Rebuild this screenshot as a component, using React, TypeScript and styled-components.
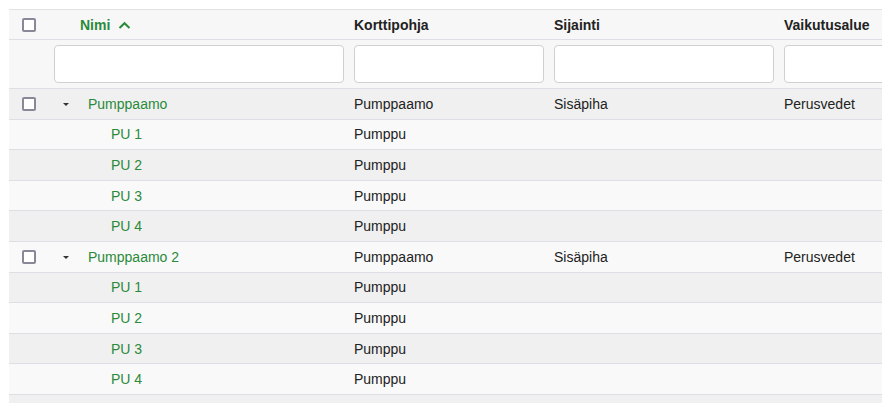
import React from "react";
import styled, { createGlobalStyle } from "styled-components";

const Global = createGlobalStyle`
  html, body { margin: 0; padding: 0; background: #fff; overflow: hidden; }
  body { font-family: "Liberation Sans", Arial, sans-serif; font-size: 14px; color: #222; }
`;

const COLS = "40px 300px 200px 230px 260px";

const Viewport = styled.div`
  box-sizing: border-box;
  width: 100vw;
  height: 100vh;
  padding: 9px 0 0 9px;
  overflow: hidden;
`;

const Table = styled.div`
  width: 1030px;
  border-top: 1px solid #e2e2e6;
`;

const Row = styled.div<{ $bg: string; $h: number }>`
  display: grid;
  grid-template-columns: ${COLS};
  align-items: center;
  box-sizing: border-box;
  height: ${(p) => p.$h}px;
  background: ${(p) => p.$bg};
  border-bottom: 1px solid #dedfe4;
`;

const Cell = styled.div`
  padding: 0 5px;
  display: flex;
  align-items: center;
  white-space: nowrap;
  overflow: hidden;
`;

const CheckCell = styled.div`
  display: flex;
  justify-content: center;
  align-items: center;
`;

const Check = styled.span`
  display: inline-block;
  box-sizing: border-box;
  width: 14px;
  height: 14px;
  border: 2px solid #8a8898;
  border-radius: 2px;
  background: #fff;
`;

const HeadText = styled.span<{ $green?: boolean }>`
  font-weight: bold;
  color: ${(p) => (p.$green ? "#2a8a3a" : "#222")};
`;

const NameHead = styled(Cell)`
  padding-left: 31px;
  gap: 8px;
`;

const FilterInput = styled.input`
  box-sizing: border-box;
  width: 100%;
  height: 38px;
  border: 1px solid #cfcfd4;
  border-radius: 4px;
  background: #fff;
  outline: none;
`;

const NameCell = styled(Cell)<{ $child?: boolean }>`
  padding-left: ${(p) => (p.$child ? 62 : 14)}px;
  color: #2a8a3a;
`;

const Caret = styled.span`
  display: inline-block;
  width: 0;
  height: 0;
  border-left: 3px solid transparent;
  border-right: 3px solid transparent;
  border-top: 3px solid #333;
  margin-right: 19px;
  margin-top: 1px;
`;

type Item = { name: string; child?: boolean; pohja: string; sijainti?: string; alue?: string };

const items: Item[] = [];
["Pumppaamo", "Pumppaamo 2"].forEach((g) => {
  items.push({ name: g, pohja: "Pumppaamo", sijainti: "Sisäpiha", alue: "Perusvedet" });
  [1, 2, 3, 4].forEach((n) => items.push({ name: `PU ${n}`, child: true, pohja: "Pumppu" }));
});

const ChevronUp = () => (
  <svg width="13" height="8" viewBox="0 0 13 8" aria-hidden>
    <polyline points="1.5,7 6.5,2.2 11.5,7" fill="none" stroke="#2a8a3a" strokeWidth="2" />
  </svg>
);

export default function App() {
  return (
    <Viewport>
      <Global />
      <Table>
        <Row $bg="#f7f7f7" $h={30}>
          <CheckCell><Check /></CheckCell>
          <NameHead>
            <HeadText $green>Nimi</HeadText>
            <ChevronUp />
          </NameHead>
          <Cell><HeadText>Korttipohja</HeadText></Cell>
          <Cell><HeadText>Sijainti</HeadText></Cell>
          <Cell><HeadText>Vaikutusalue</HeadText></Cell>
        </Row>
        <Row $bg="#f7f7f7" $h={49}>
          <CheckCell />
          <Cell><FilterInput /></Cell>
          <Cell><FilterInput /></Cell>
          <Cell><FilterInput /></Cell>
          <Cell><FilterInput /></Cell>
        </Row>
        {items.map((it, i) => (
          <Row key={i} $bg={i % 2 === 0 ? "#f0f0f0" : "#f9f9f9"} $h={30.6}>
            <CheckCell>{!it.child && <Check />}</CheckCell>
            <NameCell $child={it.child}>
              {!it.child && <Caret />}
              {it.name}
            </NameCell>
            <Cell>{it.pohja}</Cell>
            <Cell>{it.sijainti ?? ""}</Cell>
            <Cell>{it.alue ?? ""}</Cell>
          </Row>
        ))}
        <Row $bg="#f0f0f0" $h={30.6}>
          <CheckCell />
          <Cell />
          <Cell />
          <Cell />
          <Cell />
        </Row>
      </Table>
    </Viewport>
  );
}
